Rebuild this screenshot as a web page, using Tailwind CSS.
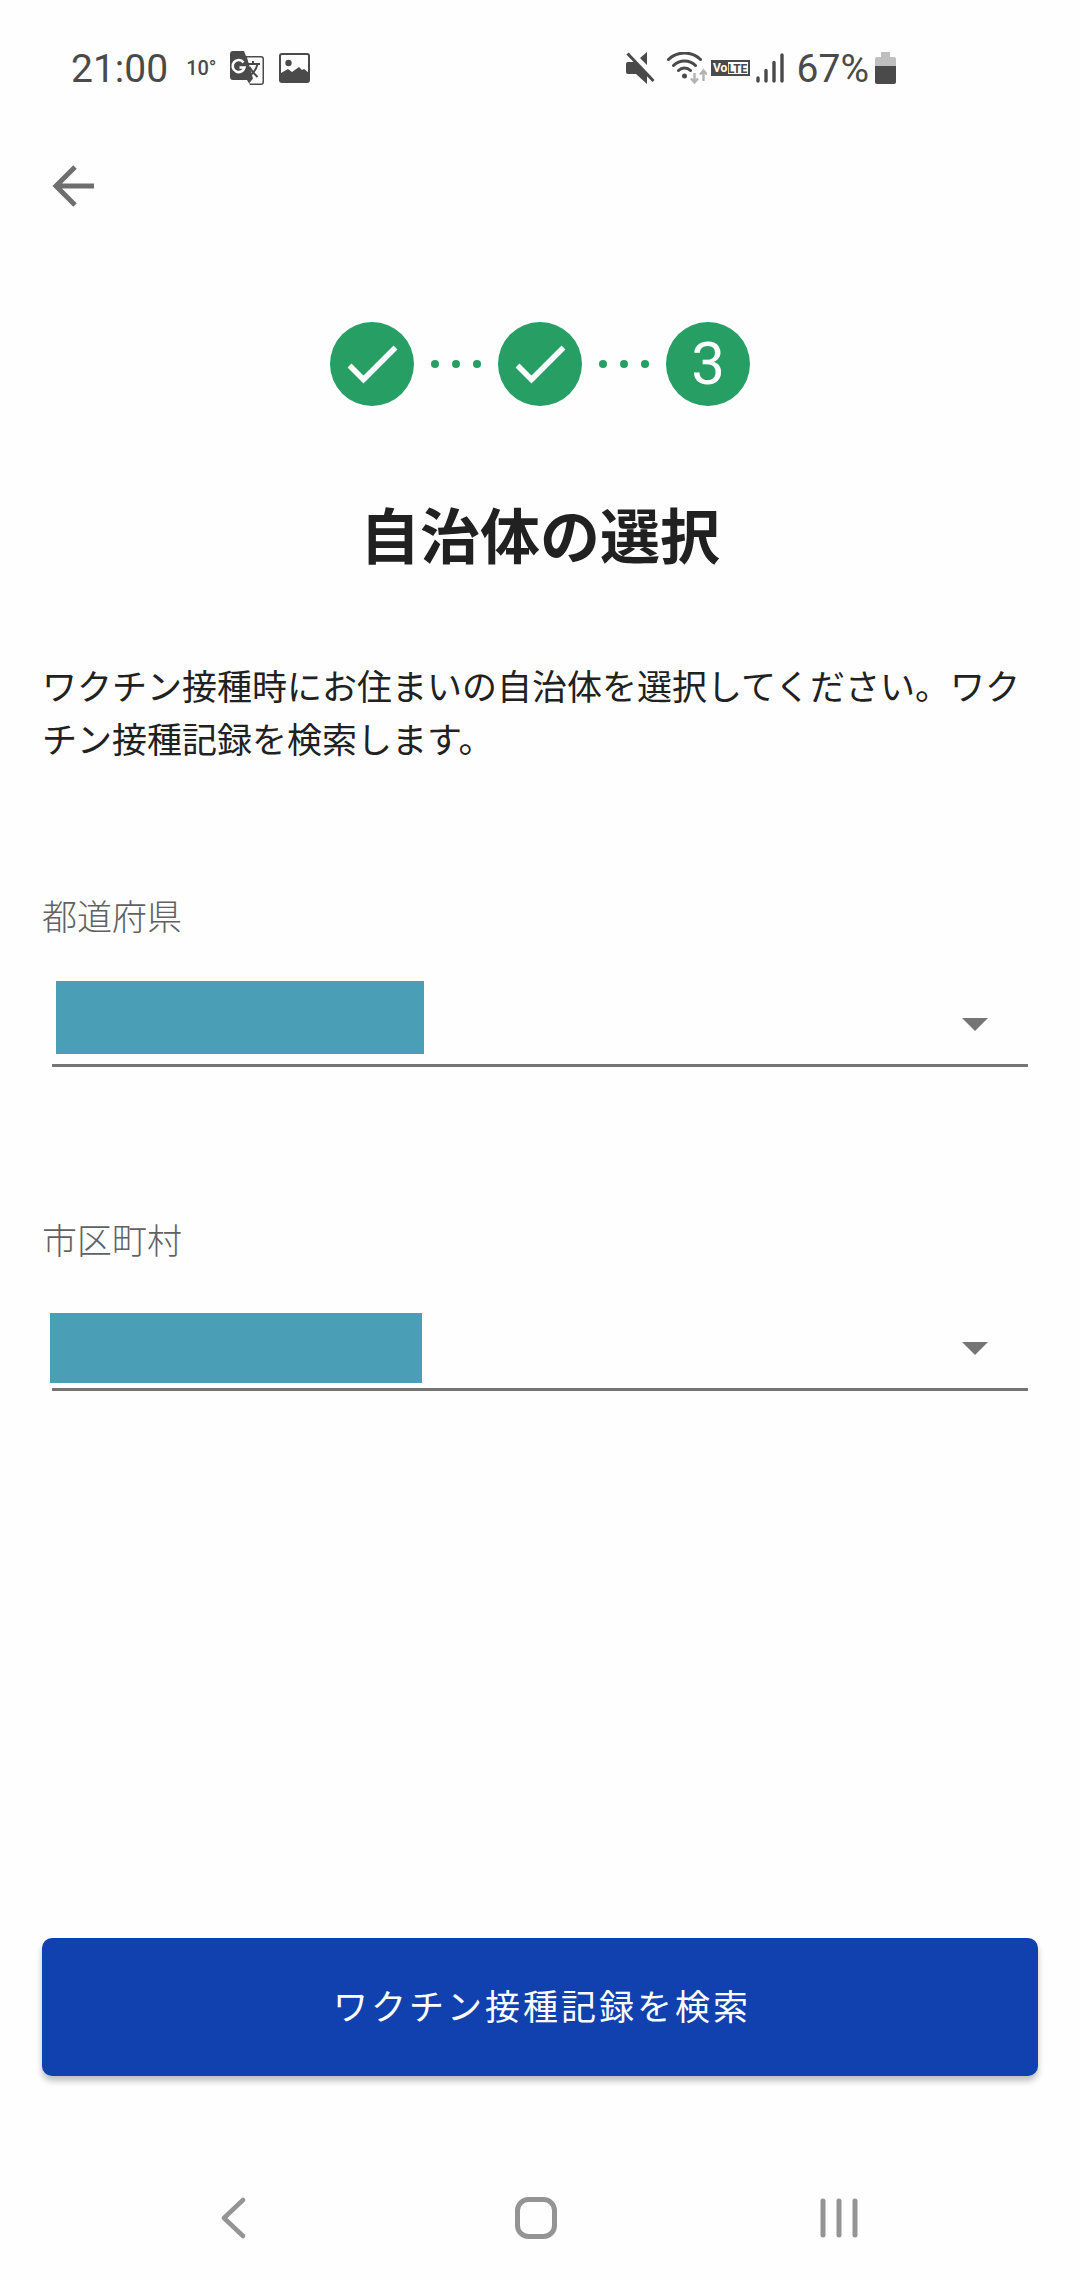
<!DOCTYPE html>
<html lang="ja">
<head>
  <meta charset="UTF-8" />
  <meta name="viewport" content="width=device-width, initial-scale=1.0"/>
  <title>自治体の選択</title>
  <script src="https://cdn.jsdelivr.net/npm/@tailwindcss/browser@4"></script>
</head>
<body class="bg-[#fefefe] text-[#212121] min-h-screen flex flex-col font-['Roboto','Noto_Sans_CJK_JP',sans-serif]">

  <!-- Status bar -->
  <header class="flex items-center justify-between h-[136px] pl-[71px] pr-[184px] text-[#4a4a4a]">
    <div class="flex items-center">
      <time class="pt-[3px] text-[39px] leading-none">21:00</time>
      <span class="ml-[18px] w-7 mr-4 text-[20px] leading-none font-medium">10°</span>
      <svg class="size-[34px]" viewBox="0 0 34 34" aria-hidden="true">
        <path fill="currentColor" d="M3 0h11l2 5h15a3 3 0 0 1 3 3v23a3 3 0 0 1-3 3H20l-3-5H3a3 3 0 0 1-3-3V3a3 3 0 0 1 3-3z"/>
        <path fill="#fefefe" d="M17 6.500h14a1.500 1.500 0 0 1 1.500 1.500v23a1.500 1.500 0 0 1-1.500 1.500H19l4-5z"/>
        <path fill="none" stroke="#fefefe" stroke-width="2.600" d="M13.500 11.500a6 6 0 1 0 1 5H9.500"/>
        <path fill="none" stroke="currentColor" stroke-width="2" d="M18 13h12M23 10v3M27.500 13c-1 5-4 9-8 12M19.500 16c2 4 5 7 8 10"/>
      </svg>
      <svg class="ml-[15px] w-[31px] h-[30px]" viewBox="0 0 31 30" aria-hidden="true">
        <rect x="1" y="1" width="29" height="28" rx="2" fill="none" stroke="currentColor" stroke-width="2"/>
        <circle cx="9.500" cy="10" r="3.200" fill="currentColor"/>
        <path fill="currentColor" d="M2 20l7-4 4 3 7-5 3 3 2-1 5 4v9H2z"/>
      </svg>
    </div>
    <div class="flex items-center">
      <svg class="w-[29px] h-8" viewBox="0 0 29 32" aria-hidden="true">
        <path fill="currentColor" d="M2 10h6l13 12v10L10 22H2a2 2 0 0 1-2-2v-8a2 2 0 0 1 2-2zM21 0v13l-7-7z"/>
        <path stroke="currentColor" stroke-width="3" d="M1.500 1.500L27.500 29"/>
      </svg>
      <svg class="ml-3 w-10 h-8" viewBox="0 0 40 32" aria-hidden="true">
        <g fill="none" stroke="currentColor" stroke-width="3" stroke-linecap="round">
          <path d="M1.500 7.500a23 23 0 0 1 32 0M6.500 13.500a16 16 0 0 1 22 0M11.500 18.500a8.500 8.500 0 0 1 12 0"/>
        </g>
        <circle cx="17.500" cy="24" r="2.500" fill="currentColor"/>
        <path fill="none" stroke="#b3b3b3" stroke-width="2.400" d="M27.500 21v9M24 26.500l3.500 4 3.500-4M36.500 29V19M33 22.500l3.500-4 3.500 4"/>
      </svg>
      <svg class="ml-1 w-[39px] h-4" viewBox="0 0 39 16" role="img" aria-label="VoLTE">
        <rect x="1" y="1" width="37" height="14" fill="none" stroke="currentColor" stroke-width="2"/>
        <path fill="currentColor" d="M0 0h17v16H0z"/>
        <text x="2" y="12" font-size="12" font-weight="700" fill="#fefefe">Vo</text>
        <text x="17" y="13" font-size="12" font-weight="700" fill="currentColor">LTE</text>
      </svg>
      <svg class="ml-[6px] w-7 h-[30px]" viewBox="0 0 28 30" aria-hidden="true">
        <path stroke="currentColor" stroke-width="3.400" stroke-linecap="round" d="M2 25v3M10 17.500V28M18 9.500V28M26 2v26"/>
      </svg>
      <span class="ml-[13px] pt-[3px] text-[39px] leading-none">67%</span>
      <svg class="ml-[6px] w-[21px] h-8" viewBox="0 0 21 32" aria-hidden="true">
        <path fill="#bfbfbf" d="M6 0h9v5h4a2 2 0 0 1 2 2v7H0V7a2 2 0 0 1 2-2h4z"/>
        <path fill="currentColor" d="M0 14h21v16a2 2 0 0 1-2 2H2a2 2 0 0 1-2-2z"/>
      </svg>
    </div>
  </header>

  <nav class="flex items-center h-[100px] px-[52px]">
    <button type="button" aria-label="戻る">
      <svg class="size-[42px]" viewBox="0 0 42 42" fill="none" stroke="#6e6e6e" stroke-width="5">
        <path d="M42 21H4M23 2L4 21l19 19"/>
      </svg>
    </button>
  </nav>

  <main class="flex flex-col grow px-[42px] pt-[86px]">

    <!-- Steps -->
    <ol class="flex items-center justify-center gap-[17px]">
      <li class="size-[84px] rounded-full bg-[#279e64]">
        <svg class="size-full" viewBox="0 0 84 84" fill="none" stroke="#ffffff" stroke-width="5.500" role="img" aria-label="完了"><path d="M19.500 43.500l14 14L65.500 25.500"/></svg>
      </li>
      <li class="flex gap-[13px]" aria-hidden="true">
        <span class="size-2 rounded-full bg-[#279e64]"></span>
        <span class="size-2 rounded-full bg-[#279e64]"></span>
        <span class="size-2 rounded-full bg-[#279e64]"></span>
      </li>
      <li class="size-[84px] rounded-full bg-[#279e64]">
        <svg class="size-full" viewBox="0 0 84 84" fill="none" stroke="#ffffff" stroke-width="5.500" role="img" aria-label="完了"><path d="M19.500 43.500l14 14L65.500 25.500"/></svg>
      </li>
      <li class="flex gap-[13px]" aria-hidden="true">
        <span class="size-2 rounded-full bg-[#279e64]"></span>
        <span class="size-2 rounded-full bg-[#279e64]"></span>
        <span class="size-2 rounded-full bg-[#279e64]"></span>
      </li>
      <li class="flex items-center justify-center size-[84px] rounded-full bg-[#279e64] text-white text-[60px] leading-none" aria-current="step">3</li>
    </ol>

    <h1 class="mt-[88px] text-center text-[60px] leading-[90px] font-bold">自治体の選択</h1>
    <p class="mt-[78px] text-[35px] leading-[53px]">ワクチン接種時にお住まいの自治体を選択してください。ワクチン接種記録を検索します。</p>

    <form id="searchForm" class="flex flex-col grow">
      <div class="mt-[124px]">
        <label for="prefecture" class="block text-[35px] leading-[53px] font-light text-[#616161]">都道府県</label>
        <div class="relative mt-7 mx-[10px]">
          <select id="prefecture" class="block w-full h-[94px] appearance-none border-b-[3px] border-[#757575] bg-transparent text-[35px]"></select>
          <span class="absolute left-1 bottom-[13px] w-[368px] h-[73px] bg-[#4a9fb7]"></span>
          <svg class="absolute right-10 bottom-9 w-[26px] h-[13px] pointer-events-none" viewBox="0 0 26 13" fill="#757575"><path d="M0 0h26L13 13z"/></svg>
        </div>
      </div>
      <div class="mt-[149px]">
        <label for="city" class="block text-[35px] leading-[53px] font-light text-[#616161]">市区町村</label>
        <div class="relative mt-7 mx-[10px]">
          <select id="city" class="block w-full h-[94px] appearance-none border-b-[3px] border-[#757575] bg-transparent text-[35px]"></select>
          <span class="absolute -left-[2px] bottom-2 w-[372px] h-[70px] bg-[#4a9fb7]"></span>
          <svg class="absolute right-10 bottom-9 w-[26px] h-[13px] pointer-events-none" viewBox="0 0 26 13" fill="#757575"><path d="M0 0h26L13 13z"/></svg>
        </div>
      </div>
      <button type="submit" class="mt-auto w-full h-[138px] pt-1 pl-1 rounded-[10px] bg-[#1041af] text-white text-[35px] tracking-[3px] shadow-[0_5px_6px_rgba(0,0,0,0.25)]">ワクチン接種記録を検索</button>
    </form>
  </main>

  <!-- Android navigation -->
  <footer class="flex justify-between pl-[212px] pr-[220px] mt-[80px] h-[124px] items-center">
    <button type="button" aria-label="戻る">
      <svg class="size-[42px]" viewBox="0 0 42 42" fill="none" stroke="#949494" stroke-width="4.500" stroke-linecap="round" stroke-linejoin="round"><path d="M31 3L12 21l19 18"/></svg>
    </button>
    <button type="button" aria-label="ホーム">
      <svg class="size-[42px]" viewBox="0 0 42 42" fill="none" stroke="#949494" stroke-width="5"><rect x="2.500" y="2.500" width="37" height="37" rx="11"/></svg>
    </button>
    <button type="button" aria-label="履歴">
      <svg class="size-[42px]" viewBox="0 0 42 42" fill="none" stroke="#949494" stroke-width="5" stroke-linecap="round"><path d="M5 4v34M21 4v34M37 4v34"/></svg>
    </button>
  </footer>

</body>
</html>
